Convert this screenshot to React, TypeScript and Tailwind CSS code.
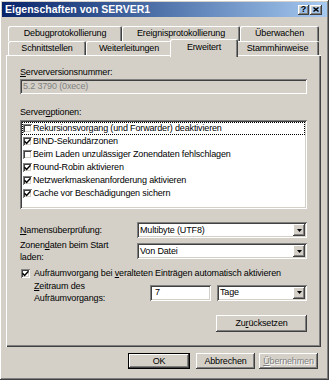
import React from "react";

const raised =
  "shadow-[inset_-1px_-1px_#404040,inset_1px_1px_#ffffff,inset_-2px_-2px_#808080,inset_2px_2px_#d4d0c8]";
const sunken =
  "shadow-[inset_1px_1px_#808080,inset_-1px_-1px_#ffffff,inset_2px_2px_#404040,inset_-2px_-2px_#d4d0c8]";

const Check = () => (
  <svg width="7" height="7" viewBox="0 0 7 7" className="block">
    <path d="M0.5 3.2 L2.6 5.4 L6.5 1.2" stroke="#000" strokeWidth="1.5" fill="none" />
  </svg>
);

const CheckBox = ({ checked }: { checked: boolean }) => (
  <span className={`w-[9px] h-[9px] shrink-0 bg-white flex items-center justify-center ${sunken}`}>
    {checked && <Check />}
  </span>
);

const DropButton = () => (
  <span className={`w-[12px] h-full bg-[#d4d0c8] flex items-center justify-center ${raised}`}>
    <svg width="5" height="3" viewBox="0 0 5 3" className="block">
      <path d="M0 0 H5 L2.5 3 Z" fill="#000" />
    </svg>
  </span>
);

const Combo = ({ value, className }: { value: string; className: string }) => (
  <div className={`bg-white flex items-stretch p-[2px] ${sunken} ${className}`}>
    <span className="flex-1 flex items-center pl-[1px] leading-none">{value}</span>
    <DropButton />
  </div>
);

type TabProps = { label: string; w: string; active?: boolean };

const Tab = ({ label, w, active }: TabProps) => (
  <div
    className={`${w} flex items-center justify-center rounded-t-[2px] bg-[#d4d0c8] shadow-[inset_1px_1px_#ffffff,inset_-1px_0_#404040,inset_-2px_0_#808080] ${
      active ? "h-[18px] -mx-[2px] -mt-[2px] -mb-[1px] relative z-10 pb-[2px]" : "h-[15px]"
    }`}
  >
    {label}
  </div>
);

const options = [
  { label: "Rekursionsvorgang (und Forwarder) deaktivieren", checked: false },
  { label: "BIND-Sekundärzonen", checked: true },
  { label: "Beim Laden unzulässiger Zonendaten fehlschlagen", checked: false },
  { label: "Round-Robin aktivieren", checked: true },
  { label: "Netzwerkmaskenanforderung aktivieren", checked: true },
  { label: "Cache vor Beschädigungen sichern", checked: true },
];

export default function App() {
  return (
    <div
      className={`w-[329px] h-[380px] bg-[#d4d0c8] text-black text-[9px] tracking-[-0.15px] leading-[11px] p-[2px] flex flex-col ${raised}`}
      style={{ fontFamily: '"Liberation Sans", Arial, sans-serif' }}
    >
      {/* title bar */}
      <div className="h-[15px] shrink-0 flex items-center justify-between pl-[3px] pr-[5px] bg-linear-to-r from-[#0a246a] to-[#a6caf0]">
        <span className="text-white font-bold text-[10.5px] tracking-normal">Eigenschaften von SERVER1</span>
        <div className="flex gap-[1px]">
          <span className={`w-[11px] h-[10px] flex items-center justify-center text-[9px] font-bold leading-none ${raised}`}>?</span>
          <span className={`w-[12px] h-[10px] flex items-center justify-center ${raised}`}>
            <svg width="6" height="5" viewBox="0 0 6 5" className="block">
              <path d="M0.5 0.5 L5.5 4.5 M5.5 0.5 L0.5 4.5" stroke="#000" strokeWidth="1.4" />
            </svg>
          </span>
        </div>
      </div>

      {/* tabs */}
      <div className="mt-[9px] ml-[6px] flex">
        <Tab label="Debugprotokollierung" w="w-[114px]" />
        <Tab label="Ereignisprotokollierung" w="w-[118px]" />
        <Tab label="Überwachen" w="w-[79px]" />
      </div>
      <div className="ml-[6px] flex items-end">
        <Tab label="Schnittstellen" w="w-[78px]" />
        <Tab label="Weiterleitungen" w="w-[86px]" />
        <Tab label="Erweitert" w="w-[68px]" active />
        <Tab label="Stammhinweise" w="w-[83px]" />
      </div>

      {/* panel */}
      <div className="ml-[4px] w-[315px] h-[292px] -mt-[1px] flex flex-col px-[14px] pt-[12px] shadow-[inset_1px_1px_#ffffff,inset_-1px_-1px_#404040,inset_-2px_-2px_#808080]">
        <div>
          <span className="underline">S</span>erverversionsnummer:
        </div>
        <div className={`mt-[1px] h-[15px] flex items-center pl-[3px] text-[#808080] ${sunken}`}>5.2 3790 (0xece)</div>

        <div className="mt-[13px]">
          Server<span className="underline">o</span>ptionen:
        </div>
        <div className={`mt-[2px] h-[89px] bg-white p-[2px] ${sunken}`}>
          {options.map((o, i) => (
            <div
              key={o.label}
              className={`h-[13px] flex items-center gap-[1px] pl-[1px] ${
                i === 0 ? "outline-1 outline-dotted outline-black -outline-offset-1" : ""
              }`}
            >
              <CheckBox checked={o.checked} />
              <span>{o.label}</span>
            </div>
          ))}
        </div>

        <div className="mt-[13px] flex items-center">
          <span className="w-[117px]">
            <span className="underline">N</span>amensüberprüfung:
          </span>
          <Combo value="Multibyte (UTF8)" className="flex-1 h-[16px]" />
        </div>
        <div className="mt-[1px] flex items-center">
          <span className="w-[117px] leading-[12px]">
            Zonen<span className="underline">d</span>aten beim Start
            <br />
            laden:
          </span>
          <Combo value="Von Datei" className="flex-1 h-[16px]" />
        </div>

        <div className="mt-[5px] flex items-center gap-[4px] pl-[1px]">
          <CheckBox checked />
          <span>
            Aufräumvorgang bei <span className="underline">v</span>eralteten Einträgen automatisch aktivieren
          </span>
        </div>

        <div className="mt-[2px] flex items-center pl-[14px]">
          <span className="w-[116px] leading-[11.5px]">
            <span className="underline">Z</span>eitraum des
            <br />
            Aufräumvorgangs:
          </span>
          <div className={`w-[61px] h-[16px] bg-white flex items-center pl-[5px] ${sunken}`}>7</div>
          <Combo value="Tage" className="ml-[6px] flex-1 h-[16px]" />
        </div>

        <div className={`mt-[11px] ml-auto w-[91px] h-[17px] flex items-center justify-center ${raised}`}>
          <span>
            Zu<span className="underline">r</span>ücksetzen
          </span>
        </div>
      </div>

      {/* dialog buttons */}
      <div className="mt-[6px] ml-[126px] flex">
        <div className="w-[62px] h-[16px] border border-black">
          <div className={`w-full h-full flex items-center justify-center ${raised}`}>OK</div>
        </div>
        <div className={`ml-[6px] w-[59px] h-[16px] flex items-center justify-center ${raised}`}>Abbrechen</div>
        <div
          className={`ml-[4px] w-[59px] h-[16px] flex items-center justify-center text-[#808080] [text-shadow:1px_1px_#ffffff] ${raised}`}
        >
          <span>
            <span className="underline">Ü</span>bernehmen
          </span>
        </div>
      </div>
    </div>
  );
}
